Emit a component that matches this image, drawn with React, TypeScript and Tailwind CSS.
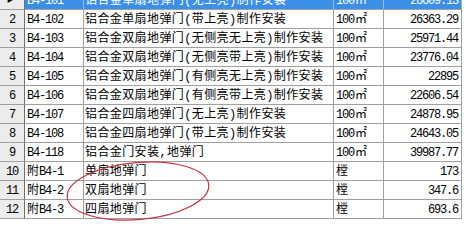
import React from 'react'

type Row = { no: number; code: string; name: string; unit: string; price: string }

const rows: Row[] = [
  { no: 1, code: 'B4-101', name: '铝合金单扇地弹门(无上亮)制作安装', unit: '100㎡', price: '26609.13' },
  { no: 2, code: 'B4-102', name: '铝合金单扇地弹门(带上亮)制作安装', unit: '100㎡', price: '26363.29' },
  { no: 3, code: 'B4-103', name: '铝合金双扇地弹门(无侧亮无上亮)制作安装', unit: '100㎡', price: '25971.44' },
  { no: 4, code: 'B4-104', name: '铝合金双扇地弹门(无侧亮带上亮)制作安装', unit: '100㎡', price: '23776.04' },
  { no: 5, code: 'B4-105', name: '铝合金双扇地弹门(有侧亮无上亮)制作安装', unit: '100㎡', price: '22895' },
  { no: 6, code: 'B4-106', name: '铝合金双扇地弹门(有侧亮带上亮)制作安装', unit: '100㎡', price: '22606.54' },
  { no: 7, code: 'B4-107', name: '铝合金四扇地弹门(无上亮)制作安装', unit: '100㎡', price: '24878.95' },
  { no: 8, code: 'B4-108', name: '铝合金四扇地弹门(带上亮)制作安装', unit: '100㎡', price: '24643.05' },
  { no: 9, code: 'B4-118', name: '铝合金门安装,地弹门', unit: '100㎡', price: '39987.77' },
  { no: 10, code: '附B4-1', name: '单扇地弹门', unit: '樘', price: '173' },
  { no: 11, code: '附B4-2', name: '双扇地弹门', unit: '樘', price: '347.6' },
  { no: 12, code: '附B4-3', name: '四扇地弹门', unit: '樘', price: '693.6' },
]

const mono = "font-['Liberation_Mono','Noto_Sans_CJK_SC',monospace]"

function Code({ text }: { text: string }) {
  // 附 is a full-width glyph, the rest is half-width
  if (text.startsWith('附')) {
    return (
      <span>
        <span className="tracking-normal">附</span>
        <span className="tracking-[-1.2px]">{text.slice(1)}</span>
      </span>
    )
  }
  return <span className="tracking-[-1.2px]">{text}</span>
}

export default function App() {
  return (
    <div className={`relative w-[465px] h-[244px] overflow-hidden bg-white text-[12px] text-black ${mono}`}>
      <div className="-mt-[9px] w-[462px]">
        {rows.map(r => {
          const sel = r.no === 1
          const line = sel ? 'border-r-[#8fbdf0]' : 'border-r-[#a0a0a0]'
          return (
            <div key={r.no} className="flex h-[19px]">
              <div className="w-[25px] shrink-0 flex items-center justify-center bg-[#ececec] border-b border-b-[#a0a0a0] border-r border-r-[#707070] pt-[1px] tracking-[-1.2px]">
                {sel ? <span className="text-[9px] leading-none -ml-[3px]">▶</span> : r.no}
              </div>
              <div className={`flex flex-1 border-b border-b-[#a0a0a0] ${sel ? 'bg-[#3b8fe6] text-white' : ''}`}>
                <div className={`w-[59px] shrink-0 flex items-center pl-[2px] pt-[1px] border-r ${line}`}>
                  <Code text={r.code} />
                </div>
                <div className={`w-[250px] shrink-0 flex items-center pl-[1px] pt-[1px] tracking-[0.4px] whitespace-nowrap overflow-hidden border-r ${line}`}>
                  {r.name}
                </div>
                <div className={`w-[50px] shrink-0 flex items-center pl-[2px] pt-[1px] border-r ${line}`}>
                  {r.unit === '樘' ? r.unit : (
                    <span><span className="tracking-[-1.2px]">100</span><span className="ml-[1px]">㎡</span></span>
                  )}
                </div>
                <div className={`w-[78px] shrink-0 flex items-center justify-end pr-[3px] pt-[1px] tracking-[-1.2px] border-r ${line}`}>
                  {r.price}
                </div>
              </div>
            </div>
          )
        })}
      </div>

      {/* hand-drawn marker ring */}
      <svg className="absolute left-0 top-0 pointer-events-none" width="465" height="244">
        <ellipse cx="138" cy="191" rx="71" ry="28.5" fill="none" stroke="#c8323f" strokeWidth="1.2" transform="rotate(-5 138 191)" />
      </svg>
    </div>
  )
}
